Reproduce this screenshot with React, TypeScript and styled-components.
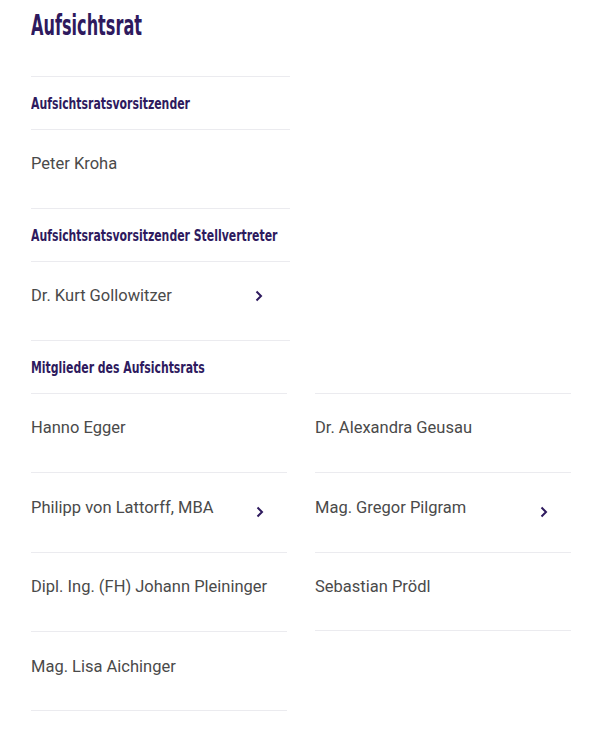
import React from 'react'
import styled, { createGlobalStyle } from 'styled-components'

const GlobalStyle = createGlobalStyle`
    body {
        margin: 0;
        background: #ffffff;
        font-family: Roboto, "Liberation Sans", sans-serif;
    }
`;

const members = [
    { name: 'Hanno Egger' },
    { name: 'Dr. Alexandra Geusau' },
    { name: 'Philipp von Lattorff, MBA', link: true },
    { name: 'Mag. Gregor Pilgram', link: true },
    { name: 'Dipl. Ing. (FH) Johann Pleininger' },
    { name: 'Sebastian Prödl' },
    { name: 'Mag. Lisa Aichinger' },
];

const Chevron = () => (
    <svg width="8" height="12" viewBox="0 0 8 12">
        <path d="M1.5 1.5 L6 6 L1.5 10.5" fill="none" stroke="#2e1a5e" strokeWidth="2" />
    </svg>
);

const App = () => {
    return (
        <Page>
            <GlobalStyle />
            <Title><Narrow $scale={0.64}>Aufsichtsrat</Narrow></Title>
            <TopList>
                <Heading><Narrow $scale={0.757}>Aufsichtsratsvorsitzender</Narrow></Heading>
                <Person $inset={27}>
                    <Name>Peter Kroha</Name>
                </Person>
                <Heading><Narrow $scale={0.757}>Aufsichtsratsvorsitzender Stellvertreter</Narrow></Heading>
                <Person $inset={27}>
                    <Name>Dr. Kurt Gollowitzer</Name>
                    <Arrow><Chevron /></Arrow>
                </Person>
                <Heading><Narrow $scale={0.757}>Mitglieder des Aufsichtsrats</Narrow></Heading>
            </TopList>
            <Grid>
                {members.map((m) => (
                    <Person key={m.name} $inset={23}>
                        <Name>{m.name}</Name>
                        {m.link && <Arrow $low><Chevron /></Arrow>}
                    </Person>
                ))}
            </Grid>
        </Page>
    )
}

export default App

const Page = styled.div`
    padding: 10px 30px 40px 31px;
`;

const Narrow = styled.span<{ $scale: number }>`
    display: inline-block;
    white-space: nowrap;
    transform: scaleX(${p => p.$scale});
    transform-origin: left center;
`;

const Title = styled.h1`
    margin: 0 0 34px 0;
    font-family: "DejaVu Sans Condensed", "Liberation Sans", sans-serif;
    font-weight: 700;
    font-size: 28px;
    line-height: 32px;
    color: #2e1a5e;
    white-space: nowrap;
`;

const TopList = styled.div`
    width: 259px;
    display: flex;
    flex-direction: column;
`;

const Heading = styled.div`
    border-top: 1px solid #ebebef;
    padding: 16.5px 0 15px 0;
    font-family: "DejaVu Sans Condensed", "Liberation Sans", sans-serif;
    font-weight: 700;
    font-size: 16px;
    line-height: 20px;
    color: #2e1a5e;
    white-space: nowrap;
`;

const Person = styled.div<{ $inset: number }>`
    border-top: 1px solid #ebebef;
    height: 79.5px;
    padding: 23.5px ${p => p.$inset}px 0 0;
    box-sizing: border-box;
    display: flex;
    justify-content: space-between;
    align-items: flex-start;
    font-size: 16.5px;
    line-height: 22px;
    color: #4a4a4a;
`;

const Name = styled.span`
    white-space: nowrap;
`;

const Arrow = styled.span<{ $low?: boolean }>`
    display: flex;
    align-items: center;
    height: 22px;
    margin-top: ${p => (p.$low ? '4px' : '0')};
`;

const Grid = styled.div`
    width: 540px;
    display: grid;
    grid-template-columns: 256px 256px;
    column-gap: 28px;

    & > div:nth-last-child(-n + 2) {
        border-bottom: 1px solid #ebebef;
    }
`;
